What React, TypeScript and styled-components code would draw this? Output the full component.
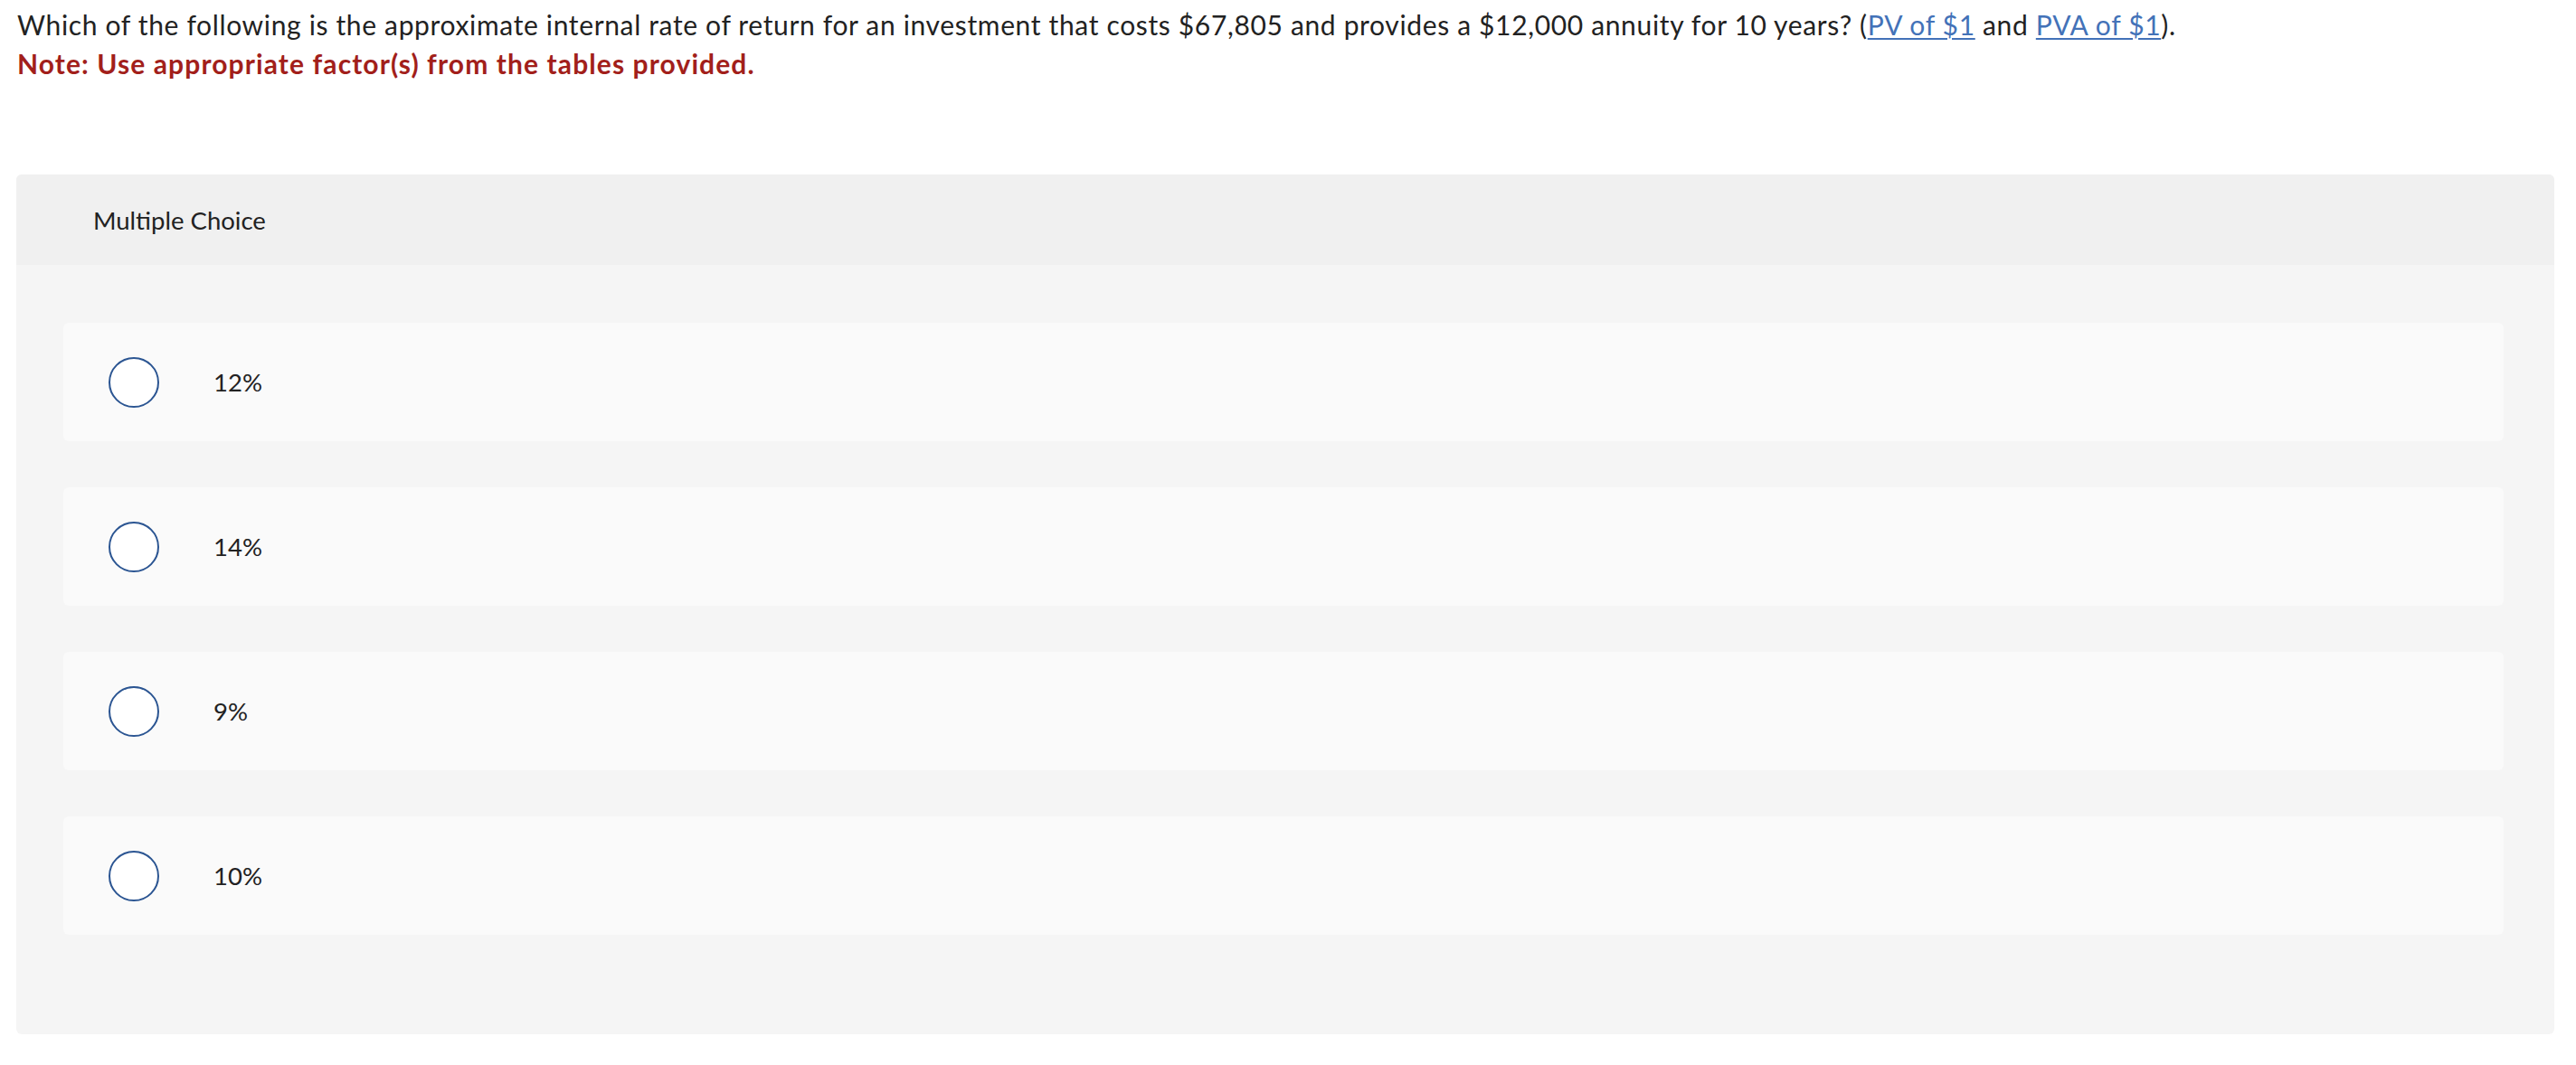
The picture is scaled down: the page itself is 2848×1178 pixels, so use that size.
import React from "react";
import styled, { createGlobalStyle } from "styled-components";

const GlobalStyle = createGlobalStyle`
  html, body {
    margin: 0;
    padding: 0;
    background: #ffffff;
  }
  body {
    font-family: Lato, "Liberation Sans", sans-serif;
    color: #222222;
  }
`;

const Page = styled.div`
  padding: 6px 24px 32px 18px;
`;

const Question = styled.div`
  font-size: 30px;
  line-height: 43px;
  letter-spacing: 0.65px;
  padding-left: 1px;
`;

const Link = styled.a`
  color: #4372b8;
  text-decoration: underline;
  text-underline-offset: 3px;
  text-decoration-thickness: 2px;
`;

const Note = styled.div`
  color: #a21f1b;
  font-weight: 700;
  letter-spacing: 1.1px;
`;

const Panel = styled.div`
  margin-top: 101px;
  background: #f5f5f5;
  border-radius: 6px;
  overflow: hidden;
`;

const PanelHeader = styled.div`
  height: 100px;
  display: flex;
  align-items: center;
  padding-left: 85px;
  background: #f0f0f0;
  font-size: 27.5px;
`;

const Choices = styled.div`
  display: flex;
  flex-direction: column;
  gap: 51px;
  padding: 64px 56px 110px 52px;
`;

const Choice = styled.label`
  height: 131px;
  display: flex;
  align-items: center;
  gap: 60px;
  padding-left: 50px;
  background: #fafafa;
  border-radius: 6px;
  font-size: 27.5px;
  cursor: pointer;
`;

const Radio = styled.span`
  box-sizing: border-box;
  width: 56px;
  height: 56px;
  border-radius: 50%;
  border: 2px solid #2b5592;
  background: #ffffff;
  flex: none;
`;

const options = ["12%", "14%", "9%", "10%"];

const App = () => {
  return (
    <Page>
      <GlobalStyle />
      <Question>
        <div>
          Which of the following is the approximate internal rate of return for an investment that costs
          $67,805 and provides a $12,000 annuity for 10 years? (<Link>PV of $1</Link> and{" "}
          <Link>PVA of $1</Link>).
        </div>
        <Note>Note: Use appropriate factor(s) from the tables provided.</Note>
      </Question>
      <Panel>
        <PanelHeader>Multiple Choice</PanelHeader>
        <Choices>
          {options.map((o) => (
            <Choice key={o}>
              <Radio />
              <span>{o}</span>
            </Choice>
          ))}
        </Choices>
      </Panel>
    </Page>
  );
};

export default App;
